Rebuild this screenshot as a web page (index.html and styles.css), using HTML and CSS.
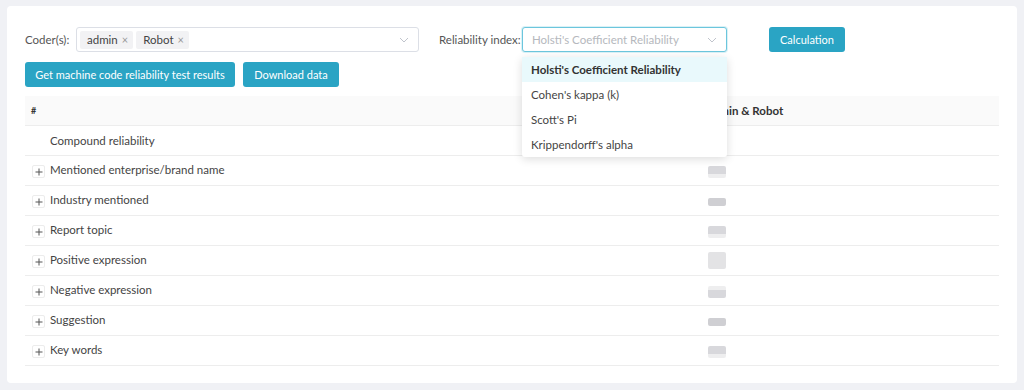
FILE: index.html
```html
<!doctype html>
<html lang="en">
    <head>
        <meta charset="UTF-8" />
        <meta name="viewport" content="width=device-width, initial-scale=1.0" />
        <title>Reliability test</title>
        <link rel="stylesheet" href="styles.css">
    </head>
    <body>
        <div class="card">
            <div class="toolbar">
                <label class="field-label label-coders">Coder(s):</label>
                <div class="select select-coders">
                    <span class="tag">admin <span class="tag-close">×</span></span>
                    <span class="tag">Robot <span class="tag-close">×</span></span>
                    <svg class="arrow" width="12" height="12" viewBox="0 0 12 12"><path d="M2 4l4 4 4-4" fill="none" stroke="#c0c4cc" stroke-width="1"/></svg>
                </div>
                <label class="field-label label-index">Reliability index:</label>
                <div class="select-wrap">
                    <div class="select select-index focused">
                        <span class="placeholder">Holsti's Coefficient Reliability</span>
                        <svg class="arrow" width="12" height="12" viewBox="0 0 12 12"><path d="M2 4l4 4 4-4" fill="none" stroke="#c0c4cc" stroke-width="1"/></svg>
                    </div>
                    <ul class="dropdown">
                        <li class="selected">Holsti's Coefficient Reliability</li>
                        <li>Cohen's kappa (k)</li>
                        <li>Scott's Pi</li>
                        <li>Krippendorff's alpha</li>
                    </ul>
                </div>
                <button class="btn btn-calc">Calculation</button>
            </div>

            <div class="actions">
                <button class="btn btn-results">Get machine code reliability test results</button>
                <button class="btn btn-download">Download data</button>
            </div>

            <table class="result-table">
                <colgroup>
                    <col class="col-name-w" />
                    <col />
                </colgroup>
                <thead>
                    <tr>
                        <th class="col-name">#</th>
                        <th class="col-value">admin &amp; Robot</th>
                    </tr>
                </thead>
                <tbody>
                    <tr>
                        <td class="col-name"><span class="expand-space"></span>Compound reliability</td>
                        <td class="col-value"></td>
                    </tr>
                    <tr>
                        <td class="col-name"><span class="expand"><svg width="10" height="10" viewBox="0 0 10 10"><path d="M1.5 5h7M5 1.5v7" stroke="#555" stroke-width="1"/></svg></span>Mentioned enterprise/brand name</td>
                        <td class="col-value"><span class="blur b1"></span></td>
                    </tr>
                    <tr>
                        <td class="col-name"><span class="expand"><svg width="10" height="10" viewBox="0 0 10 10"><path d="M1.5 5h7M5 1.5v7" stroke="#555" stroke-width="1"/></svg></span>Industry mentioned</td>
                        <td class="col-value"><span class="blur b2"></span></td>
                    </tr>
                    <tr>
                        <td class="col-name"><span class="expand"><svg width="10" height="10" viewBox="0 0 10 10"><path d="M1.5 5h7M5 1.5v7" stroke="#555" stroke-width="1"/></svg></span>Report topic</td>
                        <td class="col-value"><span class="blur b1"></span></td>
                    </tr>
                    <tr>
                        <td class="col-name"><span class="expand"><svg width="10" height="10" viewBox="0 0 10 10"><path d="M1.5 5h7M5 1.5v7" stroke="#555" stroke-width="1"/></svg></span>Positive expression</td>
                        <td class="col-value"><span class="blur b3"></span></td>
                    </tr>
                    <tr>
                        <td class="col-name"><span class="expand"><svg width="10" height="10" viewBox="0 0 10 10"><path d="M1.5 5h7M5 1.5v7" stroke="#555" stroke-width="1"/></svg></span>Negative expression</td>
                        <td class="col-value"><span class="blur b4"></span></td>
                    </tr>
                    <tr>
                        <td class="col-name"><span class="expand"><svg width="10" height="10" viewBox="0 0 10 10"><path d="M1.5 5h7M5 1.5v7" stroke="#555" stroke-width="1"/></svg></span>Suggestion</td>
                        <td class="col-value"><span class="blur b2"></span></td>
                    </tr>
                    <tr>
                        <td class="col-name"><span class="expand"><svg width="10" height="10" viewBox="0 0 10 10"><path d="M1.5 5h7M5 1.5v7" stroke="#555" stroke-width="1"/></svg></span>Key words</td>
                        <td class="col-value"><span class="blur b1"></span></td>
                    </tr>
                </tbody>
            </table>
        </div>
    </body>
</html>
```

FILE: styles.css
```css
body {
    margin: 0;
    padding: 6px 7px 7px 7px;
    background: #f0f1f5;
    font-family: Lato, "Open Sans", sans-serif;
    font-size: 11px;
    color: #333;
}
.card {
    background: #fff;
    border-radius: 4px;
    height: 377px;
    box-sizing: border-box;
    padding: 21px 18px 0 18px;
}
.toolbar {
    display: flex;
    align-items: center;
    height: 25px;
}
.field-label {
    color: #555;
    font-size: 11.5px;
}
.label-coders {
    width: 51px;
}
.label-index {
    width: 83px;
    margin-left: 20px;
}
.select {
    position: relative;
    display: flex;
    align-items: center;
    gap: 3px;
    height: 25px;
    box-sizing: border-box;
    border: 1px solid #dcdfe6;
    border-radius: 3px;
    padding: 0 3px;
    background: #fff;
}
.select-coders {
    width: 343px;
}
.select-index {
    width: 205px;
    padding: 0 9px;
}
.select.focused {
    border-color: #6cc6dd;
    box-shadow: 0 0 0 1px rgba(108, 198, 221, 0.25);
}
.arrow {
    position: absolute;
    right: 8px;
    top: 6px;
}
.tag {
    display: inline-flex;
    align-items: center;
    height: 18px;
    padding: 0 5px 0 7px;
    background: #f2f2f4;
    border-radius: 2px;
    color: #444;
    font-size: 11.5px;
}
.tag-close {
    color: #999;
    margin-left: 4px;
    font-size: 11px;
}
.placeholder {
    color: #b5b8bd;
    font-size: 11.5px;
}
.select-wrap {
    position: relative;
}
.dropdown {
    position: absolute;
    top: 30px;
    left: 0;
    width: 205px;
    margin: 0;
    padding: 0;
    list-style: none;
    background: #fff;
    border-radius: 3px;
    box-shadow: 0 2px 10px rgba(0, 0, 0, 0.14);
    z-index: 10;
}
.dropdown li {
    height: 25px;
    line-height: 25px;
    padding: 0 9px;
    color: #444;
    font-size: 11.5px;
}
.dropdown li.selected {
    background: #e9f9fc;
    font-weight: bold;
    color: #333;
}
.btn {
    height: 25px;
    padding: 0;
    border: none;
    border-radius: 3px;
    background: #2aa4c4;
    color: #fff;
    font-family: inherit;
    font-size: 11px;
    cursor: pointer;
}
.btn-calc {
    margin-left: 42px;
    width: 76px;
}
.btn-results {
    width: 210px;
}
.btn-download {
    width: 96px;
}
.actions {
    display: flex;
    gap: 8px;
    margin-top: 10px;
}
.result-table {
    margin-top: 9px;
    width: 100%;
    border-collapse: collapse;
    table-layout: fixed;
}
.col-name-w {
    width: 672px;
}
.result-table th,
.result-table td {
    height: 29px;
    padding: 0;
    border-bottom: 1px solid #ededed;
    text-align: left;
}
.result-table th {
    background: #fafafa;
    font-weight: bold;
    color: #333;
}
.result-table th.col-name {
    padding-left: 6px;
    font-size: 9px;
}
.result-table td.col-name {
    padding-left: 7px;
    color: #444;
    font-size: 11.5px;
}
.result-table .col-value {
    padding-left: 11px;
}
.result-table th.col-value {
    padding-left: 10px;
    font-size: 11.5px;
}
.expand,
.expand-space {
    display: inline-flex;
    align-items: center;
    justify-content: center;
    width: 13px;
    height: 13px;
    margin-right: 5px;
    vertical-align: -3px;
    box-sizing: border-box;
}
.expand {
    border: 1px solid #ececec;
    border-radius: 2px;
}
.blur {
    display: inline-block;
    width: 18px;
    height: 12px;
    vertical-align: middle;
    border-radius: 2px;
}
.b1 {
    background: linear-gradient(#d8d8dc 70%, #eeeeef 70%);
}
.b2 {
    height: 8px;
    background: #cfcfd3;
}
.b3 {
    height: 17px;
    background: #e3e3e5;
}
.b4 {
    background: linear-gradient(#eeeeef 35%, #d8d8dc 35%);
}
```
